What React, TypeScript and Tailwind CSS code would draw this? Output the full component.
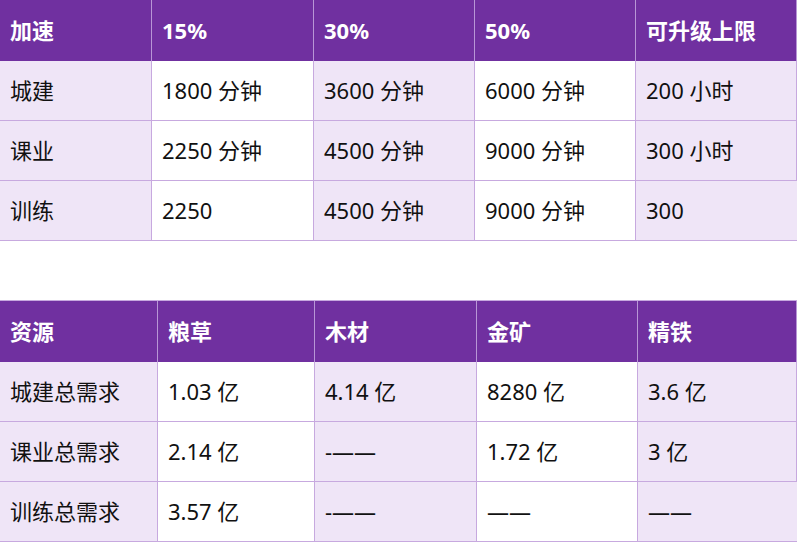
import React from 'react';

type TableProps = {
  cols: string;
  header: string[];
  rows: string[][];
};

const font = { fontFamily: '"Noto Sans", "Noto Sans CJK SC", sans-serif' };

function PurpleTable({ cols, header, rows }: TableProps) {
  return (
    <div className={`grid ${cols} w-[797px] border-r border-[#a47fc4]`}>
      {header.map((h, i) => (
        <div
          key={`h-${i}`}
          className="h-[61px] flex items-center pl-[10px] bg-[#7030a0] text-white font-bold text-[22px] border-r border-[#b896d6] last:border-r-0"
        >
          {h}
        </div>
      ))}
      {rows.map((row, r) =>
        row.map((cell, c) => (
          <div
            key={`${r}-${c}`}
            className={`h-[60px] flex items-center pl-[10px] text-[22px] text-[#111] border-r border-b border-[#c7a9df] last:border-r-0 ${
              c % 2 === 0 ? 'bg-[#efe5f7]' : 'bg-white'
            }`}
          >
            {cell}
          </div>
        ))
      )}
    </div>
  );
}

export default function App() {
  return (
    <div className="w-[800px] h-[547px] bg-white overflow-hidden" style={font}>
      {/* Speed-up table */}
      <PurpleTable
        cols="grid-cols-[152px_162px_161px_161px_161px]"
        header={['加速', '15%', '30%', '50%', '可升级上限']}
        rows={[
          ['城建', '1800 分钟', '3600 分钟', '6000 分钟', '200 小时'],
          ['课业', '2250 分钟', '4500 分钟', '9000 分钟', '300 小时'],
          ['训练', '2250', '4500 分钟', '9000 分钟', '300'],
        ]}
      />

      <div className="h-[59px]" />

      {/* Resource table */}
      <div className="w-[797px] border-t border-[#c7a9df]">
        <PurpleTable
          cols="grid-cols-[158px_157px_162px_161px_159px]"
          header={['资源', '粮草', '木材', '金矿', '精铁']}
          rows={[
            ['城建总需求', '1.03 亿', '4.14 亿', '8280 亿', '3.6 亿'],
            ['课业总需求', '2.14 亿', '-——', '1.72 亿', '3 亿'],
            ['训练总需求', '3.57 亿', '-——', '——', '——'],
          ]}
        />
      </div>
    </div>
  );
}
